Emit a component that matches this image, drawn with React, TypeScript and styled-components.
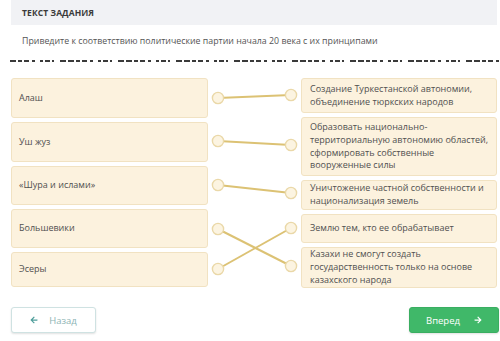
import React from "react";
import styled, { createGlobalStyle } from "styled-components";
import { FaArrowLeft, FaArrowRight } from "react-icons/fa";

const Global = createGlobalStyle`
  html, body { margin: 0; padding: 0; background: #ffffff; }
  body { font-family: "Open Sans", "Noto Sans", sans-serif; }
  * { box-sizing: border-box; }
`;

const Page = styled.div`
  width: 500px;
  height: 341px;
  padding: 0 3px 0 11px;
  overflow: hidden;
`;

const HeaderBar = styled.div`
  height: 25px;
  background: #f1f2f5;
  display: flex;
  align-items: center;
  padding-left: 11px;
  font-size: 8.5px;
  font-weight: 700;
  color: #3a3a3a;
  letter-spacing: 0.1px;
`;

const Instruction = styled.div`
  margin-top: 9px;
  padding-left: 11px;
  font-size: 8.8px;
  line-height: 14px;
  color: #555;
`;

const DashLine = styled.div`
  margin: 12px -3px 0 -1px;
  height: 2px;
  background: repeating-linear-gradient(
    90deg,
    #3a3a3a 0 6px, transparent 6px 8px,
    #3a3a3a 8px 12px, transparent 12px 14px,
    #3a3a3a 14px 19px, transparent 19px 22px,
    #3a3a3a 22px 25px, transparent 25px 30px,
    #3a3a3a 30px 33px, transparent 33px 35px,
    #3a3a3a 35px 40px, transparent 40px 42px,
    #3a3a3a 42px 44px, transparent 44px 50px,
    #3a3a3a 50px 56px, transparent 56px 58px
  );
`;

const Match = styled.div`
  margin-top: 16px;
  display: grid;
  grid-template-columns: 197px 93px 196px;
  align-items: start;
`;

const Column = styled.div`
  display: flex;
  flex-direction: column;
  gap: 4px;
`;

const Card = styled.div<{ $h: number }>`
  height: ${(p) => p.$h}px;
  background: #fcf2de;
  border: 1px solid #f1e2c2;
  border-radius: 3px;
  display: flex;
  align-items: center;
  font-size: 9px;
  line-height: 12.8px;
  color: #505050;
`;

const LeftCard = styled(Card)`
  padding: 0 7px;
`;

const RightCard = styled(Card)`
  padding: 0 8px;
`;

const Footer = styled.div`
  margin-top: 19px;
  display: flex;
  justify-content: space-between;
`;

const Button = styled.div<{ $primary?: boolean }>`
  height: 26px;
  width: ${(p) => (p.$primary ? "90px" : "85px")};
  margin-right: ${(p) => (p.$primary ? "-2px" : "0")};
  border-radius: 3px;
  display: flex;
  align-items: center;
  justify-content: center;
  gap: ${(p) => (p.$primary ? "14px" : "11px")};
  font-size: 9.5px;
  background: ${(p) => (p.$primary ? "#40b869" : "#ffffff")};
  color: ${(p) => (p.$primary ? "#ffffff" : "#8db4b4")};
  border: 1px solid ${(p) => (p.$primary ? "#3aae61" : "#cfe2e2")};
  box-shadow: 0 1px 2px rgba(0, 0, 0, 0.12);
  svg { width: 8px; height: 8px; }
`;

const BackIcon = styled(FaArrowLeft)`
  color: #4d9d9a;
`;

const left = [
  { t: "Алаш", h: 40 },
  { t: "Уш жуз", h: 40 },
  { t: "«Шура и ислами»", h: 39 },
  { t: "Большевики", h: 39 },
  { t: "Эсеры", h: 35 },
];

const right = [
  { t: "Создание Туркестанской автономии, объединение тюркских народов", h: 35 },
  { t: "Образовать национально-территориальную автономию областей, сформировать собственные вооруженные силы", h: 59 },
  { t: "Уничтожение частной собственности и национализация земель", h: 30 },
  { t: "Землю тем, кто ее обрабатывает", h: 29 },
  { t: "Казахи не смогут создать государственность только на основе казахского народа", h: 41 },
];

const leftY = [20, 63, 107, 151, 191];
const rightY = [17, 67, 115, 150, 188];
const pairs: [number, number][] = [
  [0, 0],
  [1, 1],
  [2, 2],
  [3, 4],
  [4, 3],
];

const Connectors = () => (
  <svg width="93" height="210" viewBox="0 0 93 210">
    {pairs.map(([l, r], i) => (
      <line key={i} x1={10} y1={leftY[l]} x2={83} y2={rightY[r]} stroke="#dcc274" strokeWidth={2} />
    ))}
    {leftY.map((y, i) => (
      <circle key={"l" + i} cx={10} cy={y} r={5.6} fill="#fcf4e1" stroke="#ead8a8" strokeWidth={1.4} />
    ))}
    {rightY.map((y, i) => (
      <circle key={"r" + i} cx={83} cy={y} r={5.6} fill="#fcf4e1" stroke="#ead8a8" strokeWidth={1.4} />
    ))}
  </svg>
);

export default function App() {
  return (
    <Page>
      <Global />
      <HeaderBar>ТЕКСТ ЗАДАНИЯ</HeaderBar>
      <Instruction>Приведите к соответствию политические партии начала 20 века с их принципами</Instruction>
      <DashLine />
      <Match>
        <Column>
          {left.map((c) => (
            <LeftCard key={c.t} $h={c.h}>{c.t}</LeftCard>
          ))}
        </Column>
        <Connectors />
        <Column>
          {right.map((c) => (
            <RightCard key={c.t} $h={c.h}>{c.t}</RightCard>
          ))}
        </Column>
      </Match>
      <Footer>
        <Button>
          <BackIcon />
          <span>Назад</span>
        </Button>
        <Button $primary>
          <span>Вперед</span>
          <FaArrowRight />
        </Button>
      </Footer>
    </Page>
  );
}
